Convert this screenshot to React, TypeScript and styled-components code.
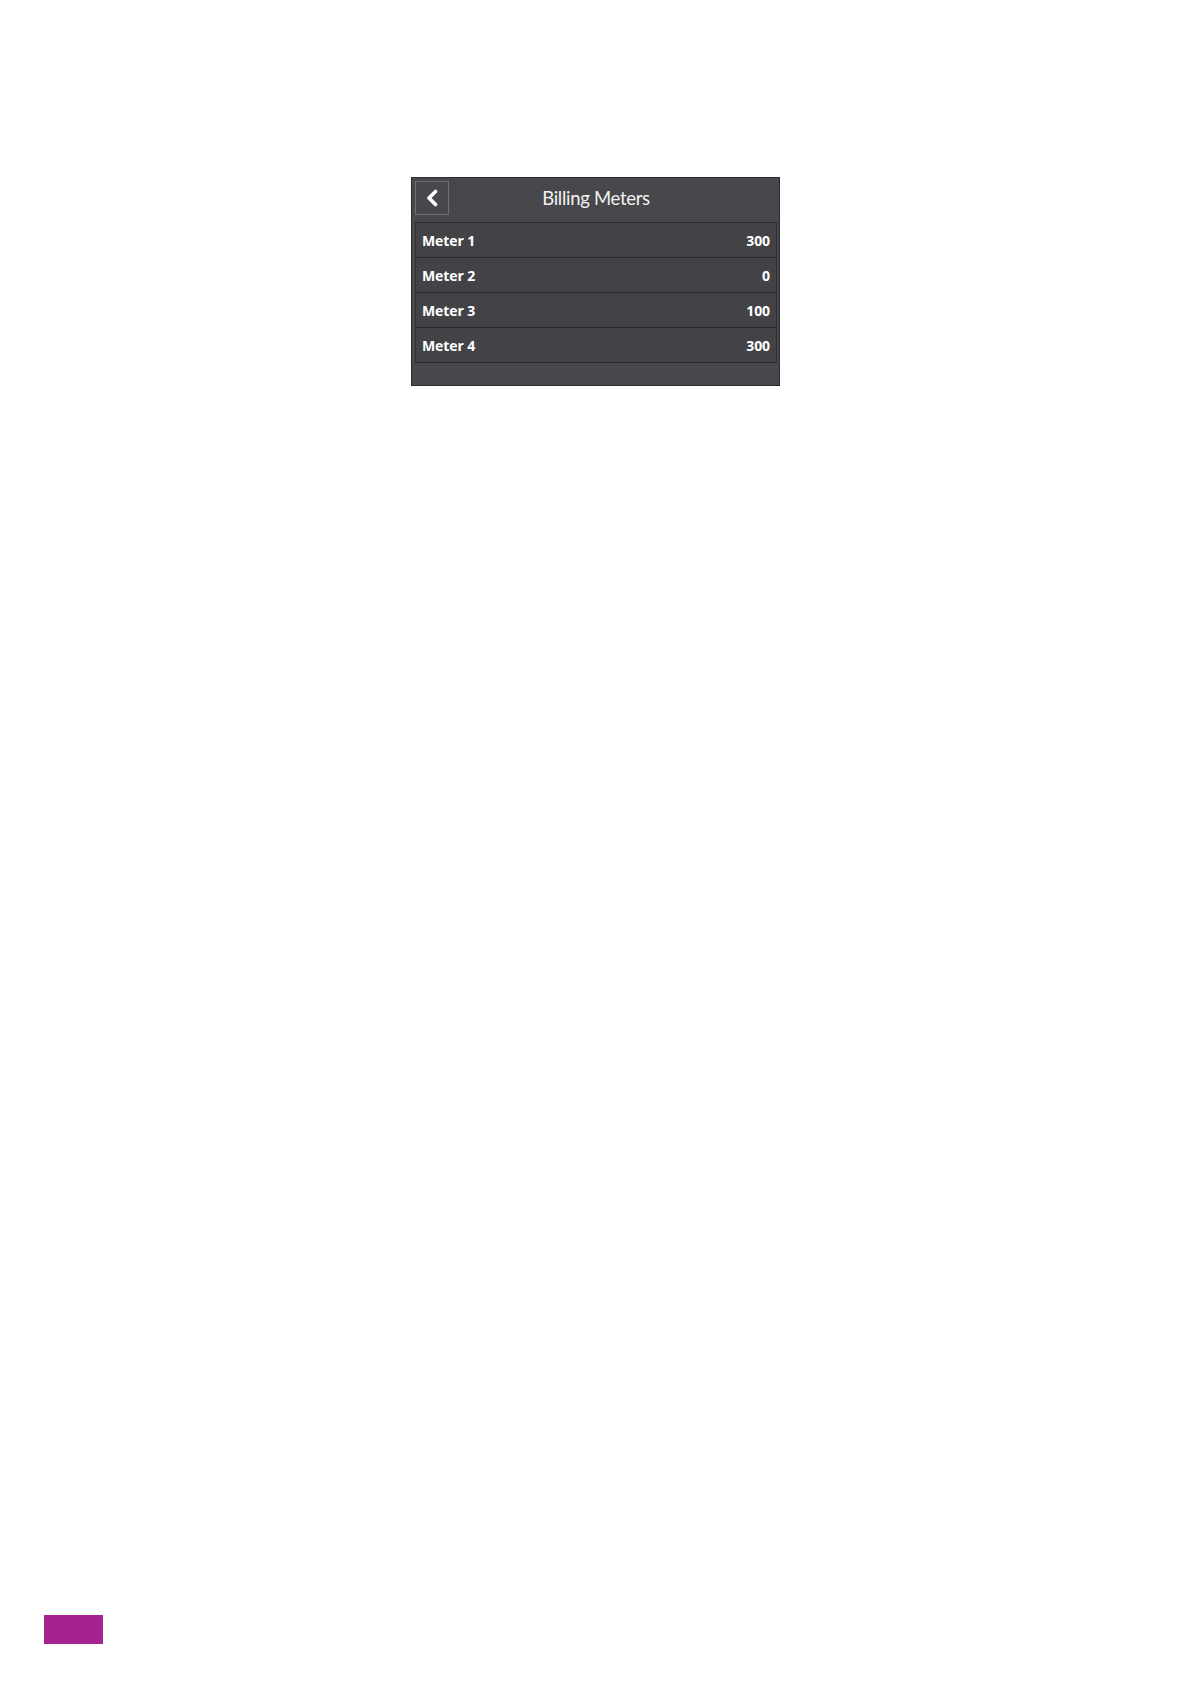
import { createGlobalStyle, styled } from "styled-components";

const GlobalStyle = createGlobalStyle`
  html, body {
    margin: 0;
    padding: 0;
    background: #ffffff;
  }
  body {
    font-family: "Open Sans", "Liberation Sans", sans-serif;
  }
`;

const meters = [
  { name: "Meter 1", value: "300" },
  { name: "Meter 2", value: "0" },
  { name: "Meter 3", value: "100" },
  { name: "Meter 4", value: "300" },
];

const App = () => {
  return (
    <>
      <GlobalStyle />
      <Page>
        <Panel>
          <Header>
            <BackButton aria-label="Back">
              <svg width="14" height="18" viewBox="0 0 14 18">
                <path
                  d="M10.5 2.5 L4 9 L10.5 15.5"
                  fill="none"
                  stroke="#ffffff"
                  strokeWidth="3.6"
                  strokeLinecap="round"
                  strokeLinejoin="round"
                />
              </svg>
            </BackButton>
            <Title>Billing Meters</Title>
            <span />
          </Header>
          <List>
            {meters.map((m) => (
              <Row key={m.name}>
                <Label>{m.name}</Label>
                <Value>{m.value}</Value>
              </Row>
            ))}
          </List>
        </Panel>
        <PageMark />
      </Page>
    </>
  );
};

export default App;

const Page = styled.div`
  display: flex;
  flex-direction: column;
  align-items: flex-start;
  height: 1684px;
  padding: 177px 0 0 411px;
  box-sizing: border-box;
`;

const Panel = styled.div`
  width: 369px;
  box-sizing: border-box;
  background: #48484c;
  border: 1px solid #2b2b2e;
  padding: 0 2px 22px 3px;
`;

const Header = styled.div`
  display: grid;
  grid-template-columns: 34px 1fr 34px;
  align-items: center;
  height: 44px;
  padding-top: 3px;
  padding-bottom: 7px;
  box-sizing: border-box;
`;

const BackButton = styled.button`
  width: 34px;
  height: 34px;
  box-sizing: border-box;
  display: flex;
  align-items: center;
  justify-content: center;
  padding: 0;
  background: #48484c;
  border: 1px solid #6e6e73;
  cursor: pointer;
`;

const Title = styled.div`
  text-align: center;
  color: #f2f2f2;
  font-family: Lato, "Open Sans", sans-serif;
  font-size: 18.5px;
  font-weight: 400;
  letter-spacing: -0.3px;
`;

const List = styled.div`
  display: flex;
  flex-direction: column;
  border-top: 1px solid #2a2a2d;
  border-left: 1px solid #2e2e31;
  border-right: 1px solid #2e2e31;
`;

const Row = styled.div`
  display: flex;
  align-items: center;
  justify-content: space-between;
  height: 35px;
  box-sizing: border-box;
  padding: 0 6px 0 6px;
  background: #434347;
  border-bottom: 1px solid #28282a;
  color: #ffffff;
  font-size: 14px;
  font-weight: 700;
  letter-spacing: -0.1px;
`;

const Label = styled.span``;

const Value = styled.span``;

const PageMark = styled.div`
  width: 59px;
  height: 29px;
  background: #a4238e;
  margin-top: auto;
  margin-bottom: 40px;
  margin-left: -367px;
`;
